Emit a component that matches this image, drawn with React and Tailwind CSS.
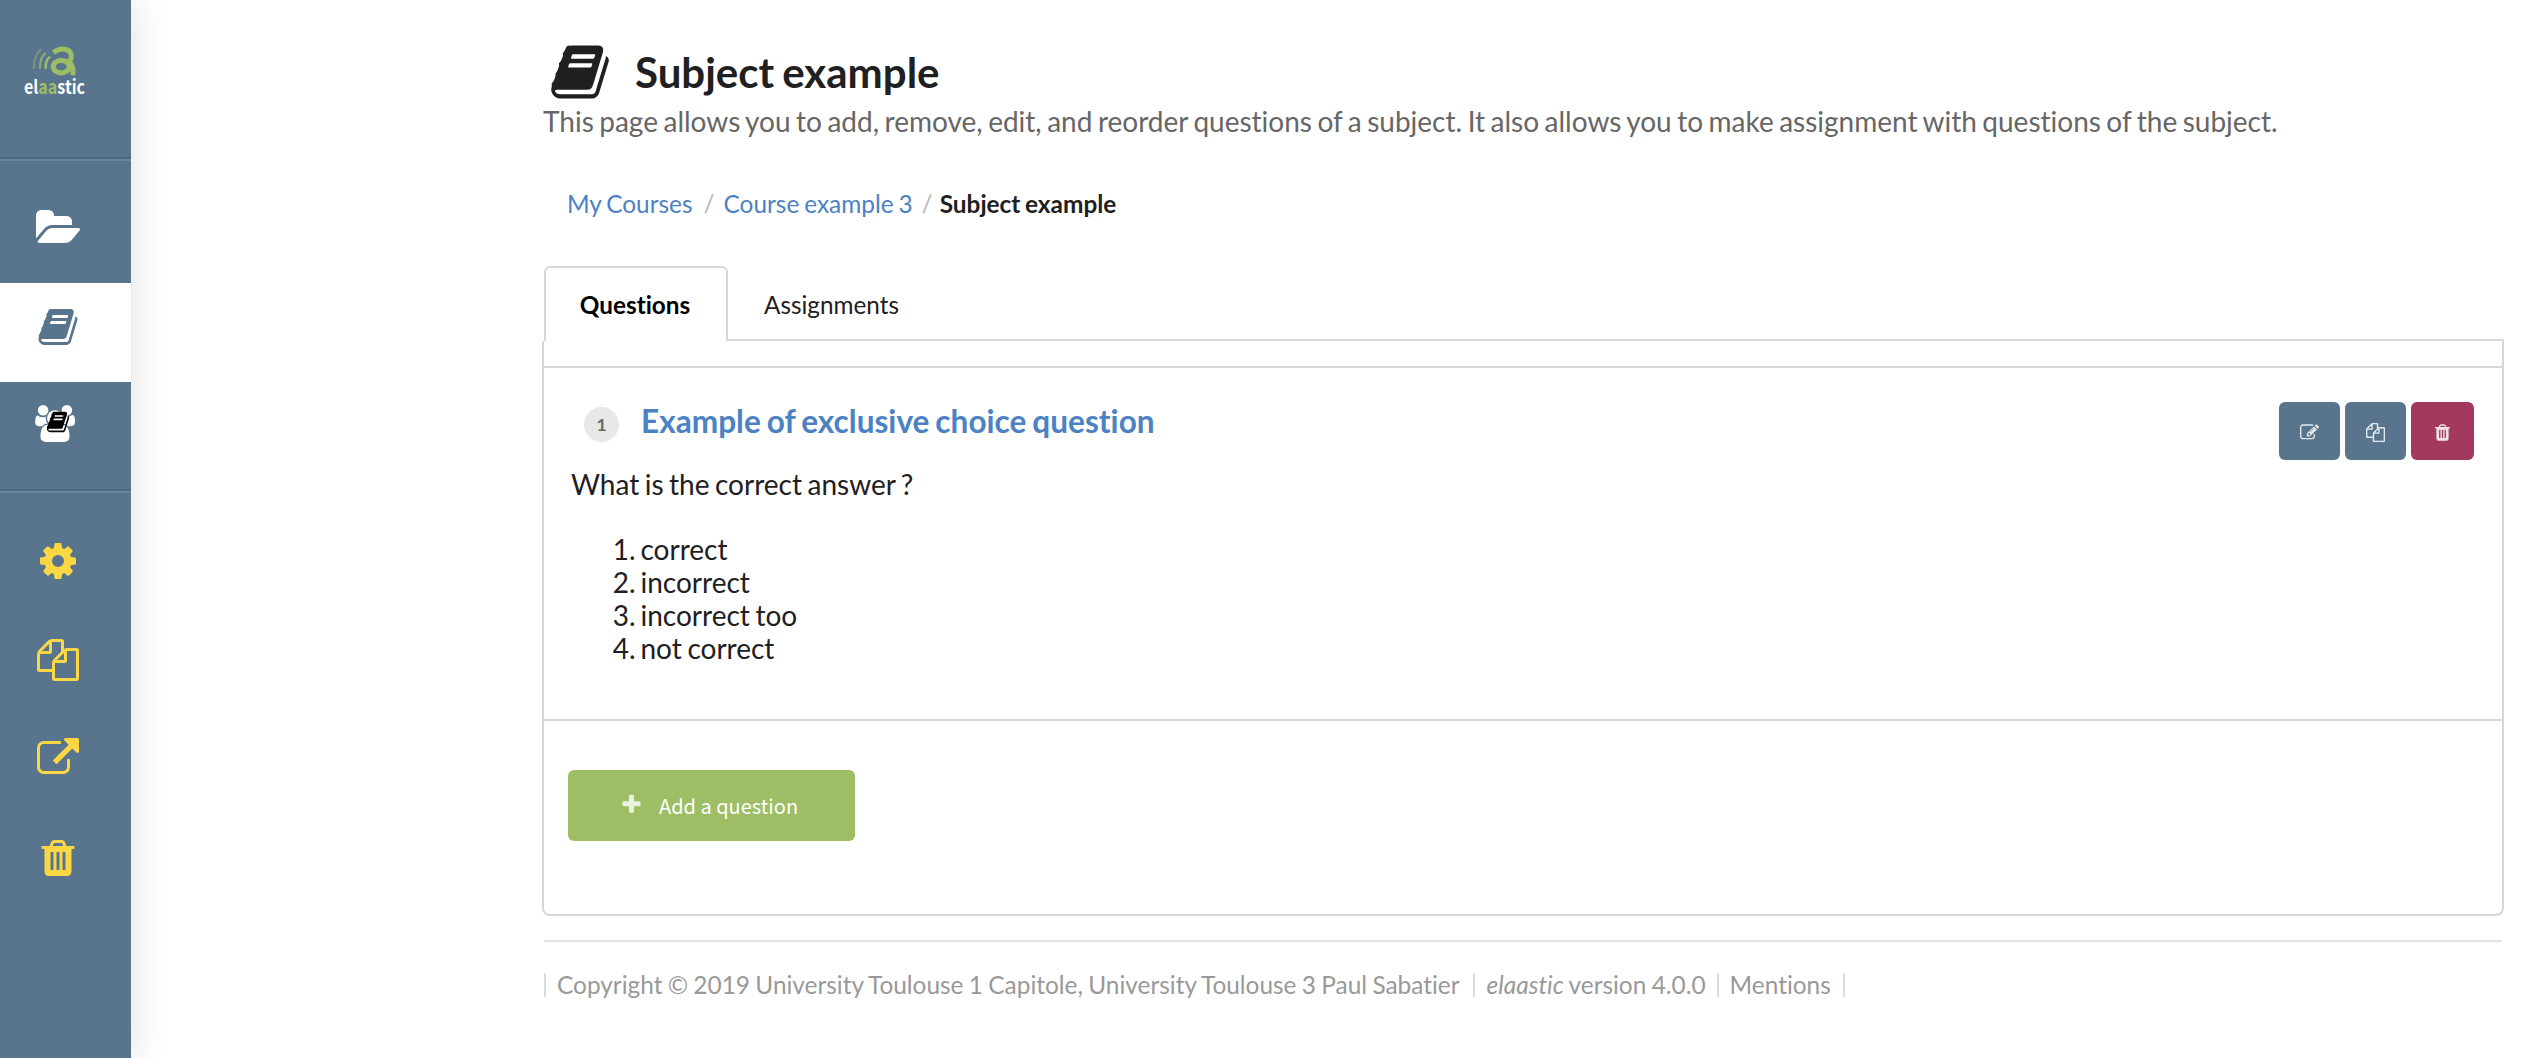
import React from 'react';

const SHAPES = {
  folder: { w: 1920, d: 'M1879 952q0 31-31 66l-336 396q-43 51-120.5 86.5t-143.5 35.5h-1088q-34 0-60.5-13t-26.5-43q0-31 31-66l336-396q43-51 120.5-86.5t143.5-35.5h1088q34 0 60.5 13t26.5 43zm-343-344v160h-832q-94 0-197 47.5t-164 119.5l-337 396-5 6q0-4-.5-12.5t-.5-12.5v-960q0-92 66-158t158-66h320q92 0 158 66t66 158v32h544q92 0 158 66t66 158z' },
  book: { w: 1792, d: 'M1703 478q40 57 18 129l-275 906q-19 64-76.5 107.5t-122.5 43.5h-923q-77 0-148.5-53.5t-99.5-131.5q-24-67-2-127 0-4 3-27t4-37q1-8-3-21.5t-3-19.5q2-11 8-21t16.5-23.5 16.5-23.5q23-38 45-91.5t30-91.5q3-10 .5-30t-.5-28q3-11 17-28t17-23q21-36 42-92t25-90q1-9-2.5-32t.5-28q4-13 22-30.5t22-22.5q19-26 42.5-84.5t27.5-96.5q1-8-3-25.5t-2-26.5q2-8 9-18t18-23 17-21q8-12 16.5-30.5t15-35 16-36 19.5-32 26.5-23.5 36-11.5 47.5 5.5l-1 3q38-9 51-9h761q74 0 114 56t18 130l-274 906q-36 119-71.5 153.5t-128.5 34.5h-869q-27 0-38 15-11 16-1 43 24 70 144 70h923q29 0 56-15.5t35-41.5l300-987q7-22 5-57 38 15 59 43zm-1064 2q-4 13 2 22.5t20 9.5h608q13 0 25.5-9.5t16.5-22.5l21-64q4-13-2-22.5t-20-9.5h-608q-13 0-25.5 9.5t-16.5 22.5zm-83 256q-4 13 2 22.5t20 9.5h608q13 0 25.5-9.5t16.5-22.5l21-64q4-13-2-22.5t-20-9.5h-608q-13 0-25.5 9.5t-16.5 22.5z' },
  users: { w: 1920, d: 'M593 896q-162 5-265 128h-134q-82 0-138-40.5t-56-118.5q0-353 124-353 6 0 43.5 21t97.5 42.5 119 21.5q67 0 133-23-5 37-5 66 0 159 93 287zm1071 637q0 120-73 189.5t-194 69.5h-874q-121 0-194-69.5t-73-189.5q0-53 3.5-103.5t14-109 26.5-108.5 43-97.5 62-81 85.5-53.5 111.5-20q10 0 43 21.5t73 48 107 48 135 21.5 135-21.5 107-48 73-48 43-21.5q61 0 111.5 20t85.5 53.5 62 81 43 97.5 26.5 108.5 14 109 3.5 103.5zm-1024-1277q0 106-75 181t-181 75-181-75-75-181 75-181 181-75 181 75 75 181zm704 384q0 159-112.5 271.5t-271.5 112.5-271.5-112.5-112.5-271.5 112.5-271.5 271.5-112.5 271.5 112.5 112.5 271.5zm576 225q0 78-56 118.5t-138 40.5h-134q-103-123-265-128 93-128 93-287 0-29-5-66 66 23 133 23 59 0 119-21.5t97.5-42.5 43.5-21q124 0 124 353zm-128-609q0 106-75 181t-181 75-181-75-75-181 75-181 181-75 181 75 75 181z' },
  cog: { w: 1792, d: 'M1152 896q0-106-75-181t-181-75-181 75-75 181 75 181 181 75 181-75 75-181zm512-109v222q0 12-8 23t-20 13l-185 28q-19 54-39 91 35 50 107 138 10 12 10 25t-9 23q-27 37-99 108t-94 71q-12 0-26-9l-138-108q-44 23-91 38-16 136-29 186-7 28-36 28h-222q-14 0-24.5-8.5t-11.5-21.5l-28-184q-49-16-90-37l-141 107q-10 9-25 9-14 0-25-11-126-114-165-168-7-10-7-23 0-12 8-23 15-21 51-66.5t54-70.5q-27-50-41-99l-183-27q-13-2-21-12.5t-8-23.5v-222q0-12 8-23t19-13l186-28q14-46 39-92-40-57-107-138-10-12-10-24 0-10 9-23 26-36 98.5-107.5t94.5-71.5q13 0 26 10l138 107q44-23 91-38 16-136 29-186 7-28 36-28h222q14 0 24.5 8.5t11.5 21.5l28 184q49 16 90 37l142-107q9-9 24-9 13 0 25 10 129 119 165 170 7 8 7 22 0 12-8 23-15 21-51 66.5t-54 70.5q26 50 41 98l183 28q13 2 21 12.5t8 23.5z' },
  files: { w: 1792, d: 'M1696 384q40 0 68 28t28 68v1216q0 40-28 68t-68 28h-960q-40 0-68-28t-28-68v-288h-544q-40 0-68-28t-28-68v-672q0-40 20-88t48-76l408-408q28-28 76-48t88-20h416q40 0 68 28t28 68v328q68-40 128-40h416zm-544 213l-299 299h299v-299zm-640-384l-299 299h299v-299zm196 647l316-316v-416h-384v416q0 40-28 68t-68 28h-416v640h512v-256q0-40 20-88t48-76zm956 804v-1152h-384v416q0 40-28 68t-68 28h-416v640h896z' },
  external: { w: 1792, d: 'M1408 928v320q0 119-84.5 203.5t-203.5 84.5h-832q-119 0-203.5-84.5t-84.5-203.5v-832q0-119 84.5-203.5t203.5-84.5h704q14 0 23 9t9 23v64q0 14-9 23t-23 9h-704q-66 0-113 47t-47 113v832q0 66 47 113t113 47h832q66 0 113-47t47-113v-320q0-14 9-23t23-9h64q14 0 23 9t9 23zm384-864v512q0 26-19 45t-45 19-45-19l-176-176-652 652q-10 10-23 10t-23-10l-114-114q-10-10-10-23t10-23l652-652-176-176q-19-19-19-45t19-45 45-19h512q26 0 45 19t19 45z' },
  trash: { w: 1792, d: 'M704 1376v-704q0-14-9-23t-23-9h-64q-14 0-23 9t-9 23v704q0 14 9 23t23 9h64q14 0 23-9t9-23zm256 0v-704q0-14-9-23t-23-9h-64q-14 0-23 9t-9 23v704q0 14 9 23t23 9h64q14 0 23-9t9-23zm256 0v-704q0-14-9-23t-23-9h-64q-14 0-23 9t-9 23v704q0 14 9 23t23 9h64q14 0 23-9t9-23zm-544-992h448l-48-117q-7-9-17-11h-317q-10 2-17 11zm928 32v64q0 14-9 23t-23 9h-96v948q0 83-47 143.5t-113 60.5h-832q-66 0-113-58.5t-47-141.5v-952h-96q-14 0-23-9t-9-23v-64q0-14 9-23t23-9h309l70-167q15-37 54-63t79-26h320q40 0 79 26t54 63l70 167h309q14 0 23 9t9 23z' },
  edit: { w: 1792, d: 'M888 1184l116-116-152-152-116 116v56h96v96h56zm440-720q-16-16-33 1l-350 350q-17 17-1 33t33-1l350-350q17-17 1-33zm80 594v190q0 119-84.5 203.5t-203.5 84.5h-832q-119 0-203.5-84.5t-84.5-203.5v-832q0-119 84.5-203.5t203.5-84.5h832q63 0 117 25 15 7 18 23 3 17-9 29l-49 49q-14 14-32 8-23-6-45-6h-832q-66 0-113 47t-47 113v832q0 66 47 113t113 47h832q66 0 113-47t47-113v-126q0-13 9-22l64-64q15-15 35-7t20 29zm-96-738l288 288-672 672h-288v-288zm444 132l-92 92-288-288 92-92q28-28 68-28t68 28l152 152q28 28 28 68t-28 68z' },
  plus: { w: 1792, d: 'M1600 736v192q0 40-28 68t-68 28h-416v416q0 40-28 68t-68 28h-192q-40 0-68-28t-28-68v-416h-416q-40 0-68-28t-28-68v-192q0-40 28-68t68-28h416v-416q0-40 28-68t68-28h192q40 0 68 28t28 68v416h416q40 0 68 28t28 68z' },
};

function Icon({ name, className }) {
  const s = SHAPES[name];
  return (
    <svg viewBox={`0 0 ${s.w} 1792`} fill="currentColor" className={className} aria-hidden="true">
      <path d={s.d} />
    </svg>
  );
}

function Logo() {
  return (
    <div className="flex h-[157px] flex-col items-start pt-[45px] pl-5">
      <svg viewBox="-4 0 70 64" className="h-[64px] w-[70px] overflow-visible" fill="none" aria-label="elaastic">
        <g stroke="#9dbe64" strokeLinecap="round">
          <path d="M16.8 4.6Q9.8 11 10 23" strokeWidth="2" opacity=".5" />
          <path d="M21 8.6Q15.6 13.5 16 22.8" strokeWidth="2.2" opacity=".75" />
          <path d="M25.3 12.4Q21.3 16 21.7 22.7" strokeWidth="2.5" />
        </g>
        <g stroke="#9dbe64">
          <path d="M29.3 7.4Q35 3.4 41 4.2Q48.5 5.6 47 13.5L45.6 17" strokeWidth="5" />
          <path d="M42 16Q50 18.5 48.9 30.2" strokeWidth="5" />
          <ellipse cx="37.2" cy="21.7" rx="8" ry="6.2" strokeWidth="5" />
        </g>
        <text x="0" y="48.5" textLength="61" lengthAdjust="spacingAndGlyphs" fill="#ffffff" className="font-['Noto_Sans_CJK_SC',sans-serif] text-[18.5px] font-bold">
          el<tspan fill="#9dbe64">aa</tspan>stic
        </text>
      </svg>
    </div>
  );
}

function Divider() {
  return <div className="h-1 shrink-0 border-t-2 border-b-2 border-t-[#4f697f] border-b-[#6b8599]" />;
}

function Item({ icon, className, size = 'h-[42px] w-[42px]' }) {
  return (
    <a className={`flex h-[99px] w-full shrink-0 justify-center pt-[23px] pr-[15px] ${className}`}>
      <Icon name={icon} className={size} />
    </a>
  );
}

function Sidebar() {
  return (
    <nav className="flex h-full w-[131px] shrink-0 flex-col bg-[#58758d] shadow-[0_0_36px_rgba(34,36,38,0.15)]">
      <Logo />
      <Divider />
      <div className="pt-[23px]">
        <Item icon="folder" className="text-white" size="h-[42px] w-[45px]" />
        <Item icon="book" className="bg-white text-[#58758d]" />
      </div>
      <a className="relative flex h-[107px] shrink-0 pt-[23px] pl-[35px] text-white">
        <Icon name="users" className="h-[37px] w-10" />
        <Icon name="book" className="absolute top-7 left-[46px] h-6 w-6 text-black" />
      </a>
      <Divider />
      <div className="pt-[23.5px] text-[#fbd743]">
        <Item icon="cog" className="" />
        <Item icon="files" className="" />
        <Item icon="external" className="" />
        <Item icon="trash" className="" />
      </div>
    </nav>
  );
}

function Header() {
  return (
    <header>
      <h1 className="flex h-[60px] items-center text-[42px] leading-[60px] font-bold">
        <Icon name="book" className="ml-[5px] h-[62px] w-[62px]" />
        <span className="ml-6 [word-spacing:-0.05em]">Subject example</span>
      </h1>
      <p className="mt-[2px] -ml-px h-[34px] text-[28px] leading-[34px] whitespace-nowrap text-[#666666] [word-spacing:-1.68px]">
        This page allows you to add, remove, edit, and reorder questions of a subject. It also allows you to make assignment with questions of the subject.
      </p>
    </header>
  );
}

function Breadcrumb() {
  return (
    <div className="mt-[49px] ml-[23px] flex h-[34px] text-[24.4px] leading-[34px] whitespace-nowrap [word-spacing:-0.055em]">
      <a className="text-[#4c82c3]">My Courses</a>
      <span className="mr-[9px] ml-[11px] text-[#b8b8b8]">/</span>
      <a className="text-[#4c82c3]">Course example 3</a>
      <span className="mr-[7px] ml-[9px] text-[#b8b8b8]">/</span>
      <span className="font-bold">Subject example</span>
    </div>
  );
}

function Action({ icon, className }) {
  return (
    <button className={`flex h-[58px] items-center justify-center rounded-[6px] pt-[2px] text-white ${className}`}>
      <Icon name={icon} className="h-[19px] w-[19px] opacity-85" />
    </button>
  );
}

function Question() {
  return (
    <section className="h-[353px] border-b-2 border-[#d7d7d8] pl-[27px] text-[28px]">
      <div className="flex pt-[34px] pr-[28px]">
        <span className="mt-[5px] ml-[13px] flex h-[35px] w-[35px] items-center justify-center rounded-full bg-[#e8e8e8] text-[17.5px] leading-none font-bold text-[#666666]">1</span>
        <a className="ml-[22px] text-[31.6px] leading-[38px] font-bold whitespace-nowrap text-[#4c82c3] [word-spacing:-0.055em]">Example of exclusive choice question</a>
        <div className="ml-auto flex">
          <Action icon="edit" className="w-[61px] bg-[#58758d]" />
          <Action icon="files" className="ml-[5px] w-[61px] bg-[#58758d]" />
          <Action icon="trash" className="ml-[5px] w-[63px] bg-[#a3395f]" />
        </div>
      </div>
      <p className="mt-[8px] leading-[33px] [word-spacing:-0.06em]">What is the correct answer ?</p>
      <ol className="mt-8 leading-[33px]">
        {['correct', 'incorrect', 'incorrect too', 'not correct'].map((answer, i) => (
          <li key={answer} className="flex">
            <span className="w-[64.5px] text-right">{i + 1}.</span>
            <span className="ml-[5px] [word-spacing:-0.055em]">{answer}</span>
          </li>
        ))}
      </ol>
    </section>
  );
}

function Footer() {
  return (
    <footer className="mt-6 ml-[2px] w-[1958px] border-t-2 border-[#e2e2e2] pt-[31px]">
      <div className="flex text-[24.4px] leading-6 whitespace-nowrap text-[#999999] [word-spacing:-0.9px]">
        <span className="border-l-2 border-[#dcdcdc] pr-[13px] pl-[11px]">Copyright © 2019 University Toulouse 1 Capitole, University Toulouse 3 Paul Sabatier</span>
        <span className="border-l-2 border-[#dcdcdc] pr-[11px] pl-3"><em>elaastic</em> version 4.0.0</span>
        <span className="border-l-2 border-[#dcdcdc] pr-3 pl-[11px]">Mentions</span>
        <span className="border-l-2 border-[#dcdcdc]" />
      </div>
    </footer>
  );
}

export default function App() {
  return (
    <div className="flex h-[1058px] w-full overflow-hidden bg-white font-['Lato',sans-serif] text-[#1f2021] [font-variant-ligatures:none]">
      <Sidebar />
      <main className="ml-[411px] w-[1962px] pt-[42px]">
        <div className="pl-[2px]">
          <Header />
          <Breadcrumb />
        </div>
        <div className="mt-[45px] ml-[2px] flex h-[75px] text-[24.3px] leading-[73px]">
          <div className="w-[184px] rounded-t-[6px] border-2 border-b-0 border-[#d7d7d8] pr-[2px] text-center font-bold text-black">Questions</div>
          <div className="flex-1 border-b-2 border-[#d7d7d8] pt-[2px] pl-9">Assignments</div>
        </div>
        <div className="h-[575px] rounded-b-[8px] border-2 border-t-0 border-[#d7d7d8]">
          <div className="h-[27px] border-b-2 border-[#d7d7d8]" />
          <Question />
          <button className="mt-[49px] ml-6 flex h-[71px] w-[287px] items-center rounded-[6px] bg-[#9dbe64] pl-[52px] text-white">
            <Icon name="plus" className="-mt-[3px] h-[23px] w-[23px] opacity-80" />
            <span className="ml-4 font-['Noto_Sans_CJK_SC',sans-serif] text-[20px] leading-none whitespace-nowrap">Add a question</span>
          </button>
        </div>
        <Footer />
      </main>
    </div>
  );
}
